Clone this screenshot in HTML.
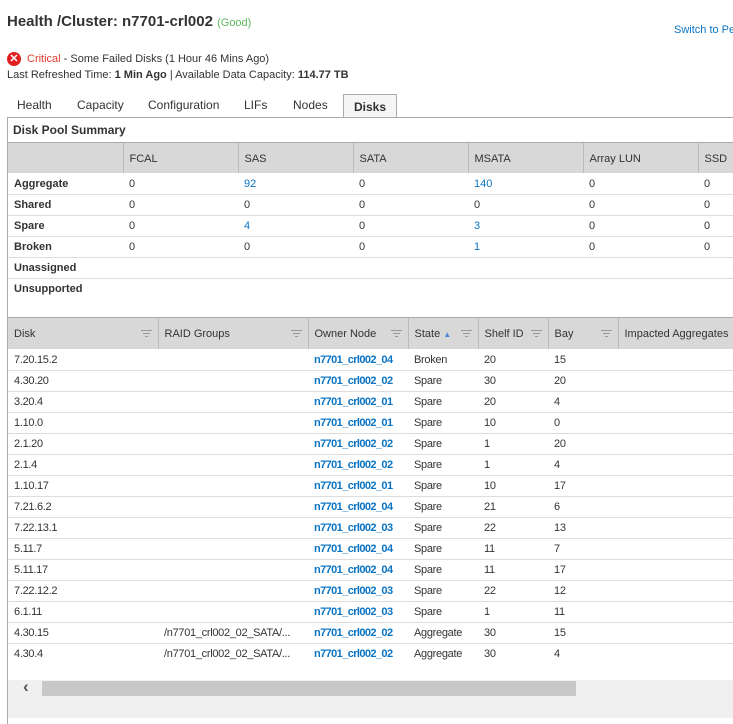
<!DOCTYPE html>
<html><head><meta charset="utf-8"><style>
*{margin:0;padding:0;box-sizing:border-box}
body{width:733px;height:724px;overflow:hidden;background:#fff;font-family:"Liberation Sans",Arial,sans-serif;color:#333;position:relative;font-size:11px}
.a{position:absolute;white-space:nowrap}
.b{color:#0a74c4}
table{border-collapse:collapse;position:absolute;table-layout:fixed}
td,th{height:21px;padding:1px 0 0 6px;text-align:left;white-space:nowrap;overflow:hidden;border-bottom:1px solid #ddd;font-size:11px}
th{font-weight:normal;background:#d8d8d8;border-left:1px solid #bbb;border-bottom:none;color:#333}
th:first-child{border-left:none}
.s td:first-child{font-weight:bold}
.d td{font-size:11px;letter-spacing:-0.3px}
.d td.b{font-weight:bold;letter-spacing:-0.6px}
.f{position:absolute;right:6px;top:12px;width:11px}
.f i{display:block;height:1px;background:#999;margin:0 auto 2px}
th{position:relative}
</style></head><body>
<div class="a" style="left:7px;top:13px;font-size:15px;font-weight:bold;color:#333">Health /Cluster: n7701-crl002 <span style="font-size:11px;font-weight:normal;color:#5cb85c">(Good)</span></div>
<div class="a b" style="left:674px;top:24px;font-size:11px">Switch to Pe</div>
<div class="a" style="left:7px;top:52px;width:14px;height:14px;border-radius:50%;background:#e02020;color:#fff;font-size:11px;font-weight:bold;text-align:center;line-height:14px">✕</div>
<div class="a" style="left:27px;top:53px"><span style="color:#e03b2c">Critical</span> - Some Failed Disks (1 Hour 46 Mins Ago)</div>
<div class="a" style="left:7px;top:69px">Last Refreshed Time: <b>1 Min Ago</b> | Available Data Capacity: <b>114.77 TB</b></div>
<div class="a" style="left:17px;top:98px;font-size:12px">Health</div>
<div class="a" style="left:77px;top:98px;font-size:12px">Capacity</div>
<div class="a" style="left:148px;top:98px;font-size:12px">Configuration</div>
<div class="a" style="left:244px;top:98px;font-size:12px">LIFs</div>
<div class="a" style="left:293px;top:98px;font-size:12px">Nodes</div>
<div class="a" style="left:343px;top:94px;width:54px;height:24px;border:1px solid #aaa;border-bottom:none;background:#f5f5f5;font-weight:bold;font-size:12px;padding:5px 0 0 10px">Disks</div>
<div class="a" style="left:7px;top:117px;width:726px;height:607px;border-left:1px solid #aaa;border-top:1px solid #aaa"></div>
<div class="a" style="left:13px;top:123px;font-weight:bold;font-size:12px">Disk Pool Summary</div>
<div class="a" style="left:8px;top:142px;width:725px;border-top:1px solid #aaa"></div>
<table class="s" style="left:8px;top:143px;width:760px">
<colgroup><col style="width:115px"><col style="width:115px"><col style="width:115px"><col style="width:115px"><col style="width:115px"><col style="width:115px"><col style="width:70px"></colgroup>
<tr><th style="height:30px"></th><th>FCAL</th><th>SAS</th><th>SATA</th><th>MSATA</th><th>Array LUN</th><th>SSD</th></tr>
<tr><td>Aggregate</td><td>0</td><td class="b">92</td><td>0</td><td class="b">140</td><td>0</td><td>0</td></tr>
<tr><td>Shared</td><td>0</td><td>0</td><td>0</td><td>0</td><td>0</td><td>0</td></tr>
<tr><td>Spare</td><td>0</td><td class="b">4</td><td>0</td><td class="b">3</td><td>0</td><td>0</td></tr>
<tr><td>Broken</td><td>0</td><td>0</td><td>0</td><td class="b">1</td><td>0</td><td>0</td></tr>
<tr><td>Unassigned</td><td></td><td></td><td></td><td></td><td></td><td></td></tr>
<tr><td style="border:none">Unsupported</td><td style="border:none"></td><td style="border:none"></td><td style="border:none"></td><td style="border:none"></td><td style="border:none"></td><td style="border:none"></td></tr>
</table>
<div class="a" style="left:8px;top:317px;width:725px;border-top:1px solid #aaa"></div>
<table class="d" style="left:8px;top:318px;width:760px">
<colgroup><col style="width:150px"><col style="width:150px"><col style="width:100px"><col style="width:70px"><col style="width:70px"><col style="width:70px"><col style="width:150px"></colgroup>
<tr><th style="height:31px">Disk<span class="f"><i style="width:11px"></i><i style="width:7px"></i><i style="width:3px"></i></span></th><th>RAID Groups<span class="f"><i style="width:11px"></i><i style="width:7px"></i><i style="width:3px"></i></span></th><th>Owner Node<span class="f"><i style="width:11px"></i><i style="width:7px"></i><i style="width:3px"></i></span></th><th>State <span style="color:#4a8ad4;font-size:8px">▲</span><span class="f"><i style="width:11px"></i><i style="width:7px"></i><i style="width:3px"></i></span></th><th>Shelf ID<span class="f"><i style="width:11px"></i><i style="width:7px"></i><i style="width:3px"></i></span></th><th>Bay<span class="f"><i style="width:11px"></i><i style="width:7px"></i><i style="width:3px"></i></span></th><th>Impacted Aggregates</th></tr>
<tr><td>7.20.15.2</td><td></td><td class="b">n7701_crl002_04</td><td>Broken</td><td>20</td><td>15</td><td></td></tr>
<tr><td>4.30.20</td><td></td><td class="b">n7701_crl002_02</td><td>Spare</td><td>30</td><td>20</td><td></td></tr>
<tr><td>3.20.4</td><td></td><td class="b">n7701_crl002_01</td><td>Spare</td><td>20</td><td>4</td><td></td></tr>
<tr><td>1.10.0</td><td></td><td class="b">n7701_crl002_01</td><td>Spare</td><td>10</td><td>0</td><td></td></tr>
<tr><td>2.1.20</td><td></td><td class="b">n7701_crl002_02</td><td>Spare</td><td>1</td><td>20</td><td></td></tr>
<tr><td>2.1.4</td><td></td><td class="b">n7701_crl002_02</td><td>Spare</td><td>1</td><td>4</td><td></td></tr>
<tr><td>1.10.17</td><td></td><td class="b">n7701_crl002_01</td><td>Spare</td><td>10</td><td>17</td><td></td></tr>
<tr><td>7.21.6.2</td><td></td><td class="b">n7701_crl002_04</td><td>Spare</td><td>21</td><td>6</td><td></td></tr>
<tr><td>7.22.13.1</td><td></td><td class="b">n7701_crl002_03</td><td>Spare</td><td>22</td><td>13</td><td></td></tr>
<tr><td>5.11.7</td><td></td><td class="b">n7701_crl002_04</td><td>Spare</td><td>11</td><td>7</td><td></td></tr>
<tr><td>5.11.17</td><td></td><td class="b">n7701_crl002_04</td><td>Spare</td><td>11</td><td>17</td><td></td></tr>
<tr><td>7.22.12.2</td><td></td><td class="b">n7701_crl002_03</td><td>Spare</td><td>22</td><td>12</td><td></td></tr>
<tr><td>6.1.11</td><td></td><td class="b">n7701_crl002_03</td><td>Spare</td><td>1</td><td>11</td><td></td></tr>
<tr><td>4.30.15</td><td>/n7701_crl002_02_SATA/...</td><td class="b">n7701_crl002_02</td><td>Aggregate</td><td>30</td><td>15</td><td></td></tr>
<tr><td style="border:none">4.30.4</td><td style="border:none">/n7701_crl002_02_SATA/...</td><td class="b" style="border:none">n7701_crl002_02</td><td style="border:none">Aggregate</td><td style="border:none">30</td><td style="border:none">4</td><td style="border:none"></td></tr>
</table>
<div class="a" style="left:8px;top:680px;width:725px;height:38px;background:#f0f0f0"></div>
<div class="a" style="left:42px;top:681px;width:534px;height:15px;background:#c8c8c8"></div>
<div class="a" style="left:23px;top:677px;font-size:17px;font-weight:bold;color:#555">‹</div>
</body></html>
